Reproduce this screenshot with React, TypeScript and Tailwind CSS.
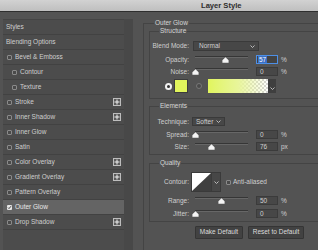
import React from 'react';

// Layer Style dialog – Outer Glow page

type StyleItem = { name: string; indent?: boolean; check?: boolean; checked?: boolean; plus?: boolean; active?: boolean };

const styleItems: StyleItem[] = [
  { name: 'Styles' },
  { name: 'Blending Options' },
  { name: 'Bevel & Emboss', check: true },
  { name: 'Contour', check: true, indent: true },
  { name: 'Texture', check: true, indent: true },
  { name: 'Stroke', check: true, plus: true },
  { name: 'Inner Shadow', check: true, plus: true },
  { name: 'Inner Glow', check: true },
  { name: 'Satin', check: true },
  { name: 'Color Overlay', check: true, plus: true },
  { name: 'Gradient Overlay', check: true, plus: true },
  { name: 'Pattern Overlay', check: true },
  { name: 'Outer Glow', check: true, checked: true, active: true },
  { name: 'Drop Shadow', check: true, plus: true },
];

function Chevron() {
  return (
    <svg width="5" height="3" viewBox="0 0 5 3" className="shrink-0">
      <path d="M0.5 0.5 L2.5 2.5 L4.5 0.5" fill="none" stroke="#c8c8c8" strokeWidth="0.9" />
    </svg>
  );
}

function Checkbox({ checked }: { checked?: boolean }) {
  if (checked) {
    return (
      <div className="w-[5px] h-[5px] rounded-[1px] bg-[#e6e6e6] flex items-center justify-center shrink-0">
        <svg width="5" height="5" viewBox="0 0 5 5">
          <path d="M1 2.6 L2 3.6 L4 1.2" fill="none" stroke="#333" strokeWidth="0.9" />
        </svg>
      </div>
    );
  }
  return <div className="w-[5px] h-[5px] rounded-[1px] border border-[#8a8a8a] bg-[#4a4a4a] shrink-0" />;
}

function PlusBox() {
  return (
    <div className="ml-auto mr-[3px] w-[8px] h-[8px] border border-[#bdbdbd] bg-[#5a5a5a] flex items-center justify-center">
      <svg width="6" height="6" viewBox="0 0 6 6">
        <path d="M3 0.5 V5.5 M0.5 3 H5.5" stroke="#f0f0f0" strokeWidth="1" />
      </svg>
    </div>
  );
}

function Thumb({ left }: { left: number }) {
  return (
    <svg width="7" height="6" viewBox="0 0 7 6" className="absolute top-[2px]" style={{ left }}>
      <path d="M3.5 0.3 L6.6 3.2 V5.7 H0.4 V3.2 Z" fill="#f4f4f4" />
    </svg>
  );
}

function Slider({ pct }: { pct: number }) {
  return (
    <div className="relative w-[60px] h-full ml-[4px] shrink-0">
      <div className="absolute left-[2px] top-[1px] w-[53px] h-[2px] border-t border-b border-t-[#363636] border-b-[#676767]" />
      <Thumb left={2 + pct * 53 - 3.5} />
    </div>
  );
}

function ValueBox({ value, focused }: { value: string; focused?: boolean }) {
  return (
    <div
      className={
        focused
          ? 'ml-[3px] w-[22px] h-full border border-[#4d8fe6] bg-[#434343] flex items-center pl-[1px] shrink-0'
          : 'ml-[3px] w-[22px] h-full border border-[#3b3b3b] bg-[#474747] flex items-center pl-[3px] shrink-0'
      }
    >
      {focused ? <span className="bg-[#3b6fc4] text-white px-[1px] leading-[7px]">{value}</span> : <span className="leading-[7px]">{value}</span>}
    </div>
  );
}

function SliderRow({ label, pct, value, unit, focused, mt }: { label: string; pct: number; value: string; unit: string; focused?: boolean; mt: string }) {
  return (
    <div className={`flex items-stretch h-[9px] ${mt}`}>
      <span className="w-[39px] text-right leading-[9px] shrink-0">{label}</span>
      <Slider pct={pct} />
      <ValueBox value={value} focused={focused} />
      <span className="ml-[3px] leading-[9px]">{unit}</span>
    </div>
  );
}

function Group({ title, className, children }: { title: string; className: string; children: React.ReactNode }) {
  return (
    <div className={`relative border border-[#444444] w-[180px] ${className}`}>
      <span className="absolute -top-[5px] left-[9px] px-[1px] bg-[#535353] leading-[8px] text-[#d6d6d6]">{title}</span>
      {children}
    </div>
  );
}

export default function App() {
  return (
    <div className="w-[318px] h-[250px] overflow-hidden bg-[#535353] font-['Liberation_Sans',Arial,sans-serif] text-[6.5px] text-[#cfcfcf] flex flex-col">
      {/* title bar */}
      <div className="h-[12px] shrink-0 bg-gradient-to-b from-[#d2d2d2] to-[#bfbfbf] border-b border-[#2e2e2e] flex items-center pl-[201px]">
        <span className="text-[7.6px] font-semibold text-[#2e2e2e] leading-none">Layer Style</span>
      </div>

      <div className="flex flex-1 min-h-0">
        {/* styles list */}
        <div className="ml-[3px] mt-[7px] flex shrink-0">
          <div className="w-[121px] bg-[#4c4c4c] border-t border-[#444]">
            {styleItems.map((item) => (
              <div
                key={item.name}
                className={`h-[15px] flex items-center border-b border-[#424242] ${item.active ? 'bg-[#646464] text-[#e8e8e8]' : ''} ${
                  item.check ? (item.indent ? 'pl-[9px]' : 'pl-[4px]') : 'pl-[3px]'
                }`}
              >
                {item.check && <Checkbox checked={item.checked} />}
                <span className={item.check ? 'ml-[3px]' : ''}>{item.name}</span>
                {item.plus && <PlusBox />}
              </div>
            ))}
          </div>
          <div className="w-[9px] bg-[#484848]" />
        </div>

        {/* settings */}
        <div className="pt-[11px] pl-[10px]">
          <div className="relative border border-[#444444] w-[200px] h-[260px]">
            <span className="absolute -top-[5px] left-[10px] px-[1px] bg-[#535353] leading-[8px] text-[#d6d6d6]">Outer Glow</span>

            <Group title="Structure" className="ml-[5px] mt-[7px] pb-[5px]">
              <div className="flex items-stretch h-[10px] mt-[9px]">
                <span className="w-[39px] text-right leading-[10px] shrink-0">Blend Mode:</span>
                <div className="ml-[4px] w-[66px] border border-[#3a3a3a] bg-[#474747] flex items-center pl-[5px] pr-[3px]">
                  <span className="flex-1">Normal</span>
                  <Chevron />
                </div>
              </div>
              <SliderRow label="Opacity:" pct={0.57} value="57" unit="%" focused mt="mt-[4px]" />
              <SliderRow label="Noise:" pct={0} value="0" unit="%" mt="mt-[3px]" />
              <div className="flex items-center h-[14px] mt-[3px]">
                <div className="ml-[15px] w-[7px] h-[7px] rounded-full bg-[#f2f2f2] flex items-center justify-center">
                  <div className="w-[3px] h-[3px] rounded-full bg-[#333]" />
                </div>
                <div className="ml-[2px] w-[14px] h-[14px] bg-[#e1f55c] border border-[#3c3c3c]" />
                <div className="ml-[8px] w-[6px] h-[6px] rounded-full border border-[#777] bg-[#4a4a4a]" />
                <div className="ml-[6px] w-[60px] h-[14px] bg-[repeating-conic-gradient(#d4d4d4_0%_25%,#ffffff_0%_50%)] bg-[length:4px_4px]">
                  <div className="w-full h-full bg-gradient-to-r from-[#e1f55c] via-[#e8f59a] to-[#e1f55c00]" />
                </div>
                <div className="w-[8px] h-[14px] bg-[#3f3f3f] flex items-end justify-center pb-[3px]">
                  <Chevron />
                </div>
              </div>
            </Group>

            <Group title="Elements" className="ml-[5px] mt-[7px] pb-[3px]">
              <div className="flex items-stretch h-[9px] mt-[10px]">
                <span className="w-[39px] text-right leading-[9px] shrink-0">Technique:</span>
                <div className="ml-[3px] w-[33px] border border-[#3a3a3a] bg-[#474747] flex items-center pl-[3px] pr-[3px]">
                  <span className="flex-1">Softer</span>
                  <Chevron />
                </div>
              </div>
              <SliderRow label="Spread:" pct={0} value="0" unit="%" mt="mt-[4px]" />
              <SliderRow label="Size:" pct={76 / 250} value="76" unit="px" mt="mt-[3px]" />
            </Group>

            <Group title="Quality" className="ml-[5px] mt-[8px] pb-[3px]">
              <div className="flex items-center h-[20px] mt-[8px]">
                <span className="w-[39px] text-right shrink-0">Contour:</span>
                <div className="ml-[2px] w-[21px] h-[20px] border border-[#3a3a3a] bg-[#3f3f3f]">
                  <svg width="19" height="18" viewBox="0 0 19 18" className="block">
                    <polygon points="0,0 19,0 0,18" fill="#ffffff" />
                  </svg>
                </div>
                <div className="w-[9px] h-[20px] bg-[#474747] border border-l-0 border-[#3a3a3a] flex items-center justify-center">
                  <Chevron />
                </div>
                <div className="ml-[5px]">
                  <Checkbox />
                </div>
                <span className="ml-[2px]">Anti-aliased</span>
              </div>
              <SliderRow label="Range:" pct={0.5} value="50" unit="%" mt="mt-[4px]" />
              <SliderRow label="Jitter:" pct={0} value="0" unit="%" mt="mt-[4px]" />
            </Group>

            <div className="flex gap-[5px] ml-[51px] mt-[4px]">
              <button className="w-[48px] h-[13px] bg-[#424242] border border-[#353535] rounded-[1px] text-[#dcdcdc] leading-none">Make Default</button>
              <button className="w-[56px] h-[13px] bg-[#424242] border border-[#353535] rounded-[1px] text-[#dcdcdc] leading-none">Reset to Default</button>
            </div>
          </div>
        </div>
      </div>
    </div>
  );
}
